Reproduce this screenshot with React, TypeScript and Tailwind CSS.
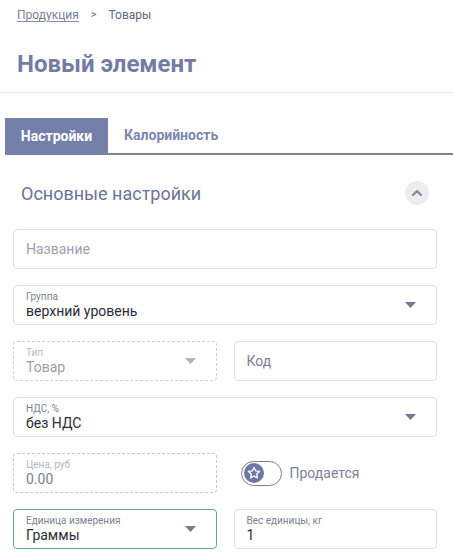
import React from "react";

const Caret = ({ color = "#737b94" }: { color?: string }) => (
  <svg width="11" height="6" viewBox="0 0 11 6" className="shrink-0">
    <path d="M0 0 L11 0 L5.5 6 Z" fill={color} />
  </svg>
);

const SelectField = ({ label, value, className = "", disabled = false }: { label: string; value: string; className?: string; disabled?: boolean }) => (
  <div className={`h-10 rounded flex items-center pl-3 pr-5 ${className}`}>
    <div className="flex-1 flex flex-col leading-none">
      <span className={`text-[10px] leading-[11px] ${disabled ? "text-[#b4b8c4]" : "text-[#7c8192]"}`}>{label}</span>
      <span className={`text-[14px] leading-[18px] ${disabled ? "text-[#9a9eab]" : "text-[#2a2d36]"}`}>{value}</span>
    </div>
    <Caret color={disabled ? "#b0b4c0" : "#737b94"} />
  </div>
);

export default function App() {
  return (
    <div className="w-[453px] h-[558px] bg-white overflow-hidden" style={{ fontFamily: "Roboto, 'Liberation Sans', sans-serif" }}>
      <div className="px-[17px] pt-[6px] h-[93px] border-b border-[#e6e7eb]">
        <div className="flex items-center text-[12px] h-[18px] text-[#5f6580]">
          <span className="underline decoration-[#8a8fa5] underline-offset-2 text-[#7a7f96]">Продукция</span>
          <span className="ml-[12px] mr-[12px] text-[11px]">&gt;</span>
          <span className="text-[#5f6580]">Товары</span>
        </div>
        <div className="mt-[26px] text-[24px] font-bold text-[#747ca3] leading-[28px]">Новый элемент</div>
      </div>

      <div className="mt-[25px] flex items-end h-[37px]">
        <div className="w-[5px] h-full" />
        <div className="w-[103px] h-full bg-[#7480a9] text-white text-[14px] font-bold flex items-center justify-center">Настройки</div>
        <div className="flex-1 h-full border-b-2 border-[#7d8491] flex items-center pl-[16px] text-[14px] font-bold text-[#7d86ad]">Калорийность</div>
      </div>

      <div className="pl-[13px] pr-[16px]">
        <div className="mt-[22px] flex items-center justify-between h-[32px] pl-[8px] pr-[8px]">
          <span className="text-[18px] text-[#6b7499]">Основные настройки</span>
          <div className="w-[24px] h-[24px] rounded-full bg-[#ececf0] flex items-center justify-center">
            <svg width="12" height="8" viewBox="0 0 12 8"><path d="M2 6 L6 2 L10 6" fill="none" stroke="#7d84a0" strokeWidth="2" strokeLinecap="round" strokeLinejoin="round" /></svg>
          </div>
        </div>

        <div className="mt-[20px] flex flex-col gap-[16px]">
          <div className="h-10 rounded border border-[#dfe1e6] flex items-center pl-3 text-[14px] text-[#9ca0b0]">Название</div>

          <SelectField label="Группа" value="верхний уровень" className="border border-[#dfe1e6]" />

          <div className="grid grid-cols-2 gap-[17px]">
            <SelectField label="Тип" value="Товар" disabled className="border border-dashed border-[#cfd1d8]" />
            <div className="h-10 rounded border border-[#dfe1e6] flex items-center pl-3 text-[14px] text-[#7c8192]">Код</div>
          </div>

          <SelectField label="НДС, %" value="без НДС" className="border border-[#dfe1e6]" />

          <div className="grid grid-cols-2 gap-[17px]">
            <div className="h-10 rounded border border-dashed border-[#c3c6ce] flex flex-col justify-center pl-3 leading-none">
              <span className="text-[10px] leading-[11px] text-[#b4b8c4]">Цена, руб</span>
              <span className="text-[14px] leading-[18px] text-[#7a7e8a]">0.00</span>
            </div>
            <div className="flex items-center pl-[7px]">
              <div className="w-[41px] h-[25px] rounded-full border border-[#7a7f8c] bg-white flex items-center pl-[2px]">
                <div className="w-[20px] h-[20px] rounded-full bg-[#6e79a2] flex items-center justify-center">
                  <svg width="14" height="14" viewBox="0 0 24 24"><path d="M12 2.5l2.9 6 6.6.8-4.9 4.5 1.3 6.5L12 17.1l-5.9 3.2 1.3-6.5-4.9-4.5 6.6-.8z" fill="none" stroke="white" strokeWidth="2.2" strokeLinejoin="round" /></svg>
                </div>
              </div>
              <span className="ml-[8px] text-[14px] text-[#7c8099]">Продается</span>
            </div>
          </div>

          <div className="grid grid-cols-2 gap-[17px]">
            <SelectField label="Единица измерения" value="Граммы" className="border border-[#5fae82]" />
            <div className="h-10 rounded border border-[#dfe1e6] flex flex-col justify-center pl-3 leading-none">
              <span className="text-[10px] leading-[11px] text-[#7c8192]">Вес единицы, кг</span>
              <span className="text-[14px] leading-[18px] text-[#2a2d36]">1</span>
            </div>
          </div>
        </div>
      </div>
    </div>
  );
}
